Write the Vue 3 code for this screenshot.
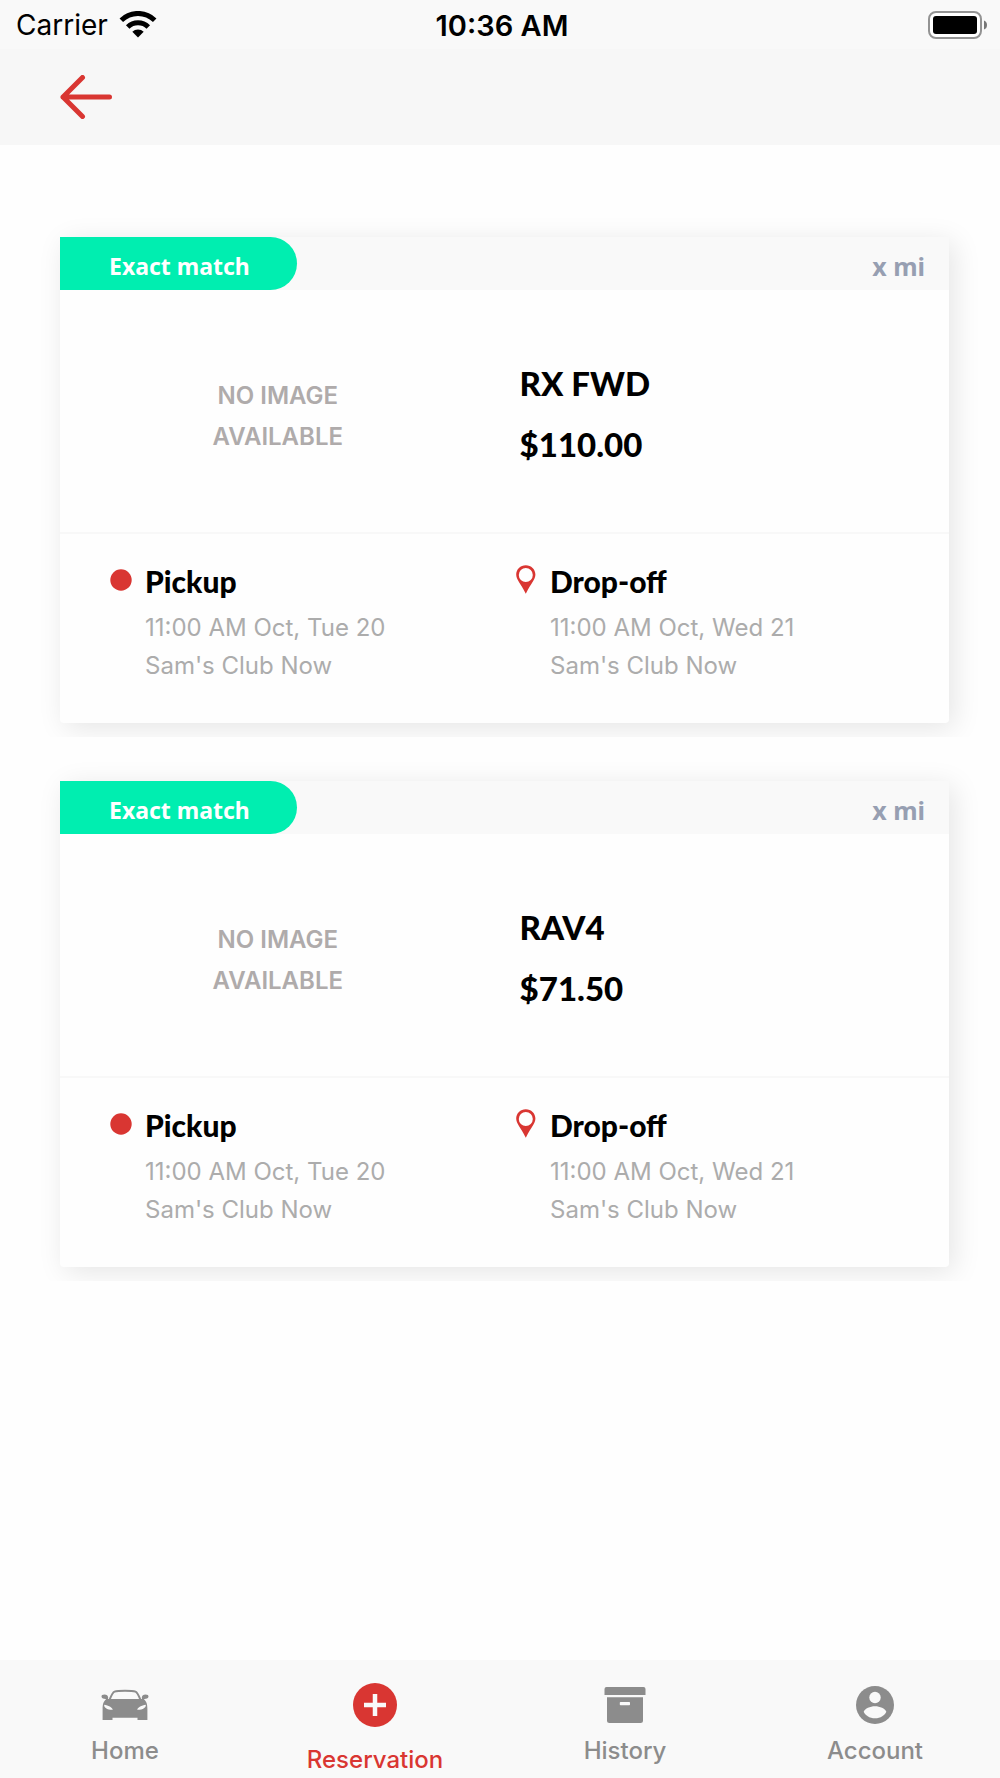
<script setup>
const vehicles = [
  { id: 1, name: 'RX FWD', price: '$110.00' },
  { id: 2, name: 'RAV4', price: '$71.50' },
]

const stops = [
  { kind: 'pickup', title: 'Pickup', time: '11:00 AM Oct, Tue 20', place: "Sam's Club Now" },
  { kind: 'dropoff', title: 'Drop-off', time: '11:00 AM Oct, Wed 21', place: "Sam's Club Now" },
]
</script>

<template>
  <div class="screen">
    <div class="status">
      <div class="status-side">
        <span>Carrier</span>
        <svg class="wifi" width="38" height="28" viewBox="0 0 38 28" aria-hidden="true">
          <g fill="none" stroke="#000">
            <path d="M2.3 9.200A24 24 0 0 1 35.7 9.200" stroke-width="5" />
            <path d="M8.7 16A14.800 14.800 0 0 1 29.300 16" stroke-width="5" />
          </g>
          <path d="M13.300 20.800A8.500 8.500 0 0 1 24.700 20.800L19 26.500Z" />
        </svg>
      </div>
      <span class="clock">10:36 AM</span>
      <div class="status-side status-end">
        <svg width="60" height="28" viewBox="0 0 60 28" aria-hidden="true">
          <rect x="1" y="1" width="52" height="26" rx="7" fill="#fff" stroke="#939393" stroke-width="2" />
          <rect x="5" y="5" width="44" height="18" rx="3" />
          <path d="M56 9.500Q59 10.500 59 14T56 18.500Z" fill="#777" />
        </svg>
      </div>
    </div>

    <header class="topbar">
      <button class="back" type="button" aria-label="Back">
        <svg width="52" height="44" viewBox="0 0 52 44" aria-hidden="true">
          <path d="M49.500 22H3M22.500 2.500L3 22L22.500 41.500" fill="none" stroke="#d93632" stroke-width="5" stroke-linecap="round" stroke-linejoin="round" />
        </svg>
      </button>
    </header>

    <main class="results">
      <div v-for="car in vehicles" :key="car.id" class="slot">
        <article class="card">
          <div class="card-head">
            <span class="match">Exact match</span>
            <span class="distance">x mi</span>
          </div>
          <div class="car">
            <div class="no-image">NO IMAGE<br />AVAILABLE</div>
            <div class="summary">
              <h2>{{ car.name }}</h2>
              <p>{{ car.price }}</p>
            </div>
          </div>
          <div class="stops">
            <section v-for="stop in stops" :key="stop.kind" class="stop">
              <svg v-if="stop.kind === 'pickup'" class="mark" width="22" height="54" viewBox="0 0 22 54" aria-hidden="true">
                <circle cx="11" cy="26" r="10.700" fill="#d93632" />
              </svg>
              <svg v-else class="mark" width="22" height="54" viewBox="0 0 22 54" aria-hidden="true">
                <path fill="#d93632" fill-rule="evenodd" d="M10.800 11.200C5.400 11.200 1.200 15.200 1.200 20.600C1.200 25.500 5 28.500 10.800 39.800C16.600 28.500 20.400 25.500 20.400 20.600C20.400 15.200 16.200 11.200 10.800 11.200ZM10.800 14A7 7 0 1 1 10.800 28A7 7 0 1 1 10.800 14Z" />
              </svg>
              <div>
                <h3>{{ stop.title }}</h3>
                <p>{{ stop.time }}</p>
                <p>{{ stop.place }}</p>
              </div>
            </section>
          </div>
        </article>
      </div>
    </main>

    <nav class="tabs" aria-label="Main">
      <a class="tab" href="#home">
        <svg width="48" height="44" viewBox="0 0 48 44" aria-hidden="true">
          <path d="M8.500 17C10.500 12 11.500 9.300 13.500 8.600C17 7.300 31 7.300 34.500 8.600C36.500 9.300 37.500 12 39.500 17" fill="none" stroke="currentColor" stroke-width="2" />
          <path fill="currentColor" fill-rule="evenodd" d="M7 16H41L40.800 14.800C41 12.500 42.300 11.600 44.500 11.600C46.500 11.600 47.700 12.500 47.500 13.800C47.300 15.500 44.500 16.300 42.800 16C45.500 18.500 46.400 21 46.400 26V37H36.500V34.700H11.500V37H1.600V26C1.600 21 2.500 18.500 5.200 16C3.500 16.300 .7 15.500 .5 13.800C.3 12.500 1.500 11.600 3.500 11.600C5.700 11.600 7 12.500 7.200 14.800ZM3.200 21.800C2.800 24.800 6 26.900 11.800 26.800C11 24.300 7.500 22.500 3.200 21.800ZM44.800 21.800C45.200 24.800 42 26.900 36.200 26.800C37 24.300 40.500 22.500 44.800 21.800Z" />
        </svg>
        <span>Home</span>
      </a>
      <a class="tab active" href="#reservation" aria-current="page">
        <svg width="44" height="44" viewBox="0 0 44 44" aria-hidden="true">
          <circle cx="22" cy="22" r="22" fill="currentColor" />
          <path d="M22 11V33M11 22H33" stroke="#f9f9f9" stroke-width="4.500" />
        </svg>
        <span>Reservation</span>
      </a>
      <a class="tab" href="#history">
        <svg width="44" height="44" viewBox="0 0 44 44" aria-hidden="true">
          <path fill="currentColor" fill-rule="evenodd" d="M3.500 4H40.500Q42.500 4 42.500 6V12H1.500V6Q1.500 4 3.500 4ZM4 14.300H40V37.500Q40 40 37.500 40H6.500Q4 40 4 37.500ZM17.500 19Q16.800 19 16.800 19.800V21.500Q16.800 22.300 17.500 22.300H26.300Q27 22.300 27 21.500V19.800Q27 19 26.300 19Z" />
        </svg>
        <span>History</span>
      </a>
      <a class="tab" href="#account">
        <svg width="44" height="44" viewBox="0 0 44 44" aria-hidden="true">
          <circle cx="22" cy="22" r="19" fill="currentColor" />
          <circle cx="22" cy="14.500" r="5.700" fill="#f9f9f9" />
          <path d="M10.700 28.700C12 25.500 17 23.200 22 23.200S32 25.500 33.300 28.700C32 32 27.500 35.300 22 35.300S12 32 10.700 28.700Z" fill="#f9f9f9" />
        </svg>
        <span>Account</span>
      </a>
    </nav>
  </div>
</template>

<style>
body {
  margin: 0;
  background: #fefefe;
}
</style>

<style scoped>
.screen {
  display: flex;
  flex-direction: column;
  min-height: 100vh;
  background: #fefefe;
  color: #000;
  font-family: Inter, 'Liberation Sans', sans-serif;
}

h2,
h3,
p {
  margin: 0;
}

.status {
  display: flex;
  align-items: center;
  box-sizing: border-box;
  height: 49px;
  padding: 1px 12px 0 16px;
  background: #f9f9f9;
  font-size: 28px;
}

.status-side {
  display: flex;
  flex: 1;
  align-items: center;
  gap: 11px;
}

.status-end {
  justify-content: flex-end;
}

.clock {
  font-size: 29px;
  font-weight: 600;
}

.topbar {
  display: flex;
  align-items: center;
  height: 96px;
  padding: 0 60px;
  background: #f7f7f7;
}

.back {
  display: flex;
  padding: 0;
  border: 0;
  background: none;
  cursor: pointer;
}

.results {
  display: flex;
  flex: 1;
  flex-direction: column;
  gap: 22px;
  padding: 70px 0;
}

.slot {
  padding: 22px 51px 14px 60px;
  overflow: hidden;
}

.card {
  border-radius: 4px;
  background: #fefefe;
  box-shadow: 5px 5px 28px rgba(0, 0, 0, 0.1);
}

.card-head {
  display: flex;
  align-items: center;
  justify-content: space-between;
  background: #f9f9f9;
  font-family: 'Noto Sans', sans-serif;
  font-weight: 700;
  line-height: 48px;
}

.match {
  box-sizing: border-box;
  width: 237px;
  padding: 5px 10px 0 49px;
  border-radius: 0 27px 27px 0;
  background: #00eeb0;
  color: #fff;
  font-size: 23px;
}

.distance {
  padding: 5px 24px 0 0;
  color: #979fb2;
  font-size: 25px;
}

.car {
  display: grid;
  grid-template-columns: 49% 51%;
  align-items: center;
  height: 234px;
  padding-top: 8px;
  border-bottom: 2px solid #f8f8f8;
}

.no-image {
  padding-top: 2px;
  color: #afabab;
  font-size: 24px;
  font-weight: 600;
  line-height: 41px;
  text-align: center;
}

.summary {
  padding: 0 0 2px 24px;
  font-family: Lato, sans-serif;
  font-size: 33px;
  font-weight: 900;
  line-height: 61px;
}

.summary h2 {
  font-size: inherit;
  font-weight: inherit;
}

.stops {
  display: grid;
  grid-template-columns: 1fr 1fr;
  padding: 20px 29px 38px 50px;
}

.stop {
  display: flex;
  gap: 13px;
}

.mark {
  flex: none;
}

.stop h3 {
  font-family: Lato, sans-serif;
  font-size: 30px;
  font-weight: 900;
  line-height: 55px;
}

.stop p {
  color: #acacac;
  font-size: 24px;
  line-height: 38px;
}

.tabs {
  display: flex;
  height: 118px;
  background: #f9f9f9;
}

.tab {
  display: flex;
  flex: 1;
  flex-direction: column;
  align-items: center;
  gap: 9px;
  padding-top: 23px;
  color: #8c8c8c;
  font-size: 24px;
  font-weight: 500;
  line-height: 30px;
  text-decoration: none;
}

.active {
  gap: 18px;
  color: #d93632;
}
</style>
